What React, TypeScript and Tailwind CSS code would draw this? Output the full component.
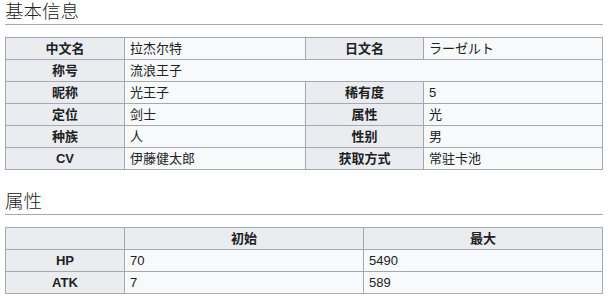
import React from "react";

const font = { fontFamily: '"Liberation Sans", "Noto Sans CJK SC", sans-serif' };

function Heading({ children }: { children: React.ReactNode }) {
  return (
    <div
      className="h-[25px] pt-[1px] border-b border-[#a2a9b1] text-[18.5px] leading-[19px] font-light text-[#202122]"
      style={{ fontFamily: '"Noto Sans CJK SC Light", "Noto Sans CJK SC DemiLight", "Noto Sans CJK SC", sans-serif', fontWeight: 300 }}
    >
      {children}
    </div>
  );
}

function L({ children }: { children?: React.ReactNode }) {
  return (
    <div className="bg-[#eaecf0] flex items-center justify-center font-bold text-[13px] text-[#202122]">
      {children}
    </div>
  );
}

function V({ children, span }: { children?: React.ReactNode; span?: boolean }) {
  return (
    <div
      className={
        "bg-[#f8f9fa] flex items-center pl-[5px] text-[13px] text-[#202122] " +
        (span ? "col-span-3" : "")
      }
    >
      {children}
    </div>
  );
}

export default function App() {
  return (
    <div className="w-[610px] h-[299px] bg-white pl-[5px] pr-[7px] overflow-hidden" style={font}>
      <Heading>基本信息</Heading>
      <div className="mt-[12px] grid grid-cols-[118px_180px_117px_178px] auto-rows-[21px] gap-px p-px bg-[#a2a9b1] w-[598px] leading-none">
        <L>中文名</L>
        <V>拉杰尔特</V>
        <L>日文名</L>
        <V>ラーゼルト</V>
        <L>称号</L>
        <V span>流浪王子</V>
        <L>昵称</L>
        <V>光王子</V>
        <L>稀有度</L>
        <V>5</V>
        <L>定位</L>
        <V>剑士</V>
        <L>属性</L>
        <V>光</V>
        <L>种族</L>
        <V>人</V>
        <L>性别</L>
        <V>男</V>
        <L>CV</L>
        <V>伊藤健太郎</V>
        <L>获取方式</L>
        <V>常驻卡池</V>
      </div>
      <div className="mt-[20px]">
        <Heading>属性</Heading>
      </div>
      <div className="mt-[12px] grid grid-cols-[118px_238px_238px] auto-rows-[21px] gap-px p-px bg-[#a2a9b1] w-[598px] leading-none">
        <L></L>
        <L>初始</L>
        <L>最大</L>
        <L>HP</L>
        <V>70</V>
        <V>5490</V>
        <L>ATK</L>
        <V>7</V>
        <V>589</V>
      </div>
    </div>
  );
}
